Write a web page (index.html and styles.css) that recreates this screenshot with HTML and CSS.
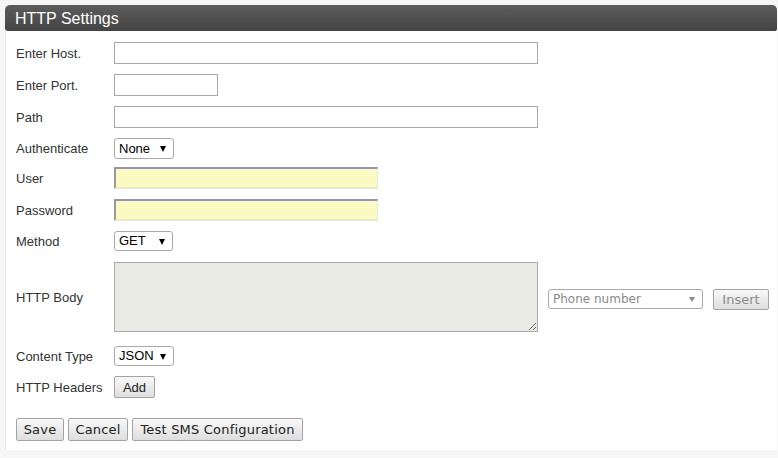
FILE: index.html
```html
<!DOCTYPE html>
<html>
<head>
<meta charset="utf-8">
<link rel="stylesheet" href="styles.css">
</head>
<body>
<div class="panel">
  <div class="panel-head">HTTP Settings</div>
  <form class="panel-body">
    <div class="row"><label class="lbl">Enter Host.</label><input class="txt wide" type="text"></div>
    <div class="row"><label class="lbl">Enter Port.</label><input class="txt short" type="text"></div>
    <div class="row"><label class="lbl">Path</label><input class="txt wide" type="text"></div>
    <div class="row row-auth"><label class="lbl">Authenticate</label><span class="sel sel-auth">None</span></div>
    <div class="row"><label class="lbl">User</label><input class="txt auto" type="text"></div>
    <div class="row"><label class="lbl">Password</label><input class="txt auto" type="password"></div>
    <div class="row row-method"><label class="lbl">Method</label><span class="sel sel-method">GET</span></div>
    <div class="row row-body">
      <label class="lbl">HTTP Body</label>
      <textarea class="area"></textarea>
      <span class="sel sel-phone">Phone number</span>
      <button type="button" class="btn btn-insert">Insert</button>
    </div>
    <div class="row"><label class="lbl">Content Type</label><span class="sel sel-ct">JSON</span></div>
    <div class="row"><label class="lbl">HTTP Headers</label><button type="button" class="btn btn-add">Add</button></div>
    <div class="actions">
      <button type="button" class="btn btn-save">Save</button>
      <button type="button" class="btn btn-cancel">Cancel</button>
      <button type="button" class="btn btn-test">Test SMS Configuration</button>
    </div>
  </form>
</div>
</body>
</html>
```
FILE: styles.css
```css
html, body {
  margin: 0;
  padding: 0;
}
body {
  background: #f6f6f6;
  padding: 5px 1px 0 5px;
  font-family: "Liberation Sans", Arial, sans-serif;
  font-size: 13px;
  color: #333;
}
.panel {
  background: #fff;
  border-left: 1px solid #e6e6e6;
}
.panel-head {
  height: 26px;
  line-height: 27px;
  padding-left: 10px;
  color: #fff;
  font-size: 16px;
  background: linear-gradient(#5c5c5c, #444);
  border-radius: 5px 5px 2px 3px;
  margin-left: -1px;
}
.panel-body {
  display: flex;
  flex-direction: column;
  padding: 6px 0 9px 10px;
  margin: 0;
}
.row {
  display: flex;
  align-items: center;
  padding: 5px 0;
}
.row-auth { padding-bottom: 3px; }
.row-method { padding-bottom: 6px; }
.lbl {
  width: 98px;
  flex: none;
  font-size: 13px;
  color: #333;
}
.txt {
  box-sizing: border-box;
  height: 22px;
  border: 1px solid #a9a9a9;
  background: #fff;
  margin: 0;
  padding: 0 3px;
  font: 13px "Liberation Sans", Arial, sans-serif;
}
.wide { width: 424px; }
.short { width: 104px; }
.auto {
  width: 264px;
  background: #fafac2;
  border-top: 2px solid #999;
  border-left: 2px solid #999;
  border-right: 1px solid #e6e6e6;
  border-bottom: 2px solid #e6e6e6;
}
.sel {
  position: relative;
  box-sizing: border-box;
  display: inline-block;
  height: 20px;
  line-height: 18px;
  border: 1px solid #a9a9a9;
  border-radius: 3px;
  background: #fff;
  padding-left: 4px;
  color: #000;
  font-size: 13px;
}
.sel::after {
  content: "";
  position: absolute;
  right: 7px;
  top: 7px;
  border-left: 3.5px solid transparent;
  border-right: 3.5px solid transparent;
  border-top: 6px solid #000;
}
.sel-auth { width: 60px; height: 21px; line-height: 20px; }
.sel-method { width: 59px; }
.sel-ct { width: 60px; }
.row-body { padding: 5px 0 9px; }
.area {
  box-sizing: border-box;
  width: 424px;
  height: 70px;
  margin: 0;
  border: 1px solid #a9a9a9;
  background: #eaeae4;
  resize: both;
}
.sel-phone {
  width: 155px;
  margin-left: 10px;
  margin-top: 4px;
  color: #8a8a8a;
  font-family: "DejaVu Sans", Verdana, sans-serif;
  font-size: 12px;
}
.sel-phone::after {
  border-top-color: #888;
  border-left-width: 3px;
  border-right-width: 3px;
  border-top-width: 5px;
}
.btn {
  box-sizing: border-box;
  height: 22px;
  margin: 0;
  padding: 0;
  border: 1px solid #a3a3a3;
  border-radius: 2px;
  background: linear-gradient(#f8f8f8, #dedede);
  color: #222;
  font: 13px "DejaVu Sans", Verdana, sans-serif;
}
.btn-insert {
  margin-left: 10px;
  margin-top: 4px;
  width: 56px;
  height: 21px;
  color: #8a8a8a;
}
.btn-add {
  font-family: "Liberation Sans", Arial, sans-serif;
  width: 41px;
}
.actions {
  display: flex;
  gap: 4px;
  padding-top: 15px;
}
.actions .btn { height: 23px; letter-spacing: 0.2px; }
.btn-save { width: 48px; }
.btn-cancel { width: 60px; }
.btn-test { width: 171px; }
```
